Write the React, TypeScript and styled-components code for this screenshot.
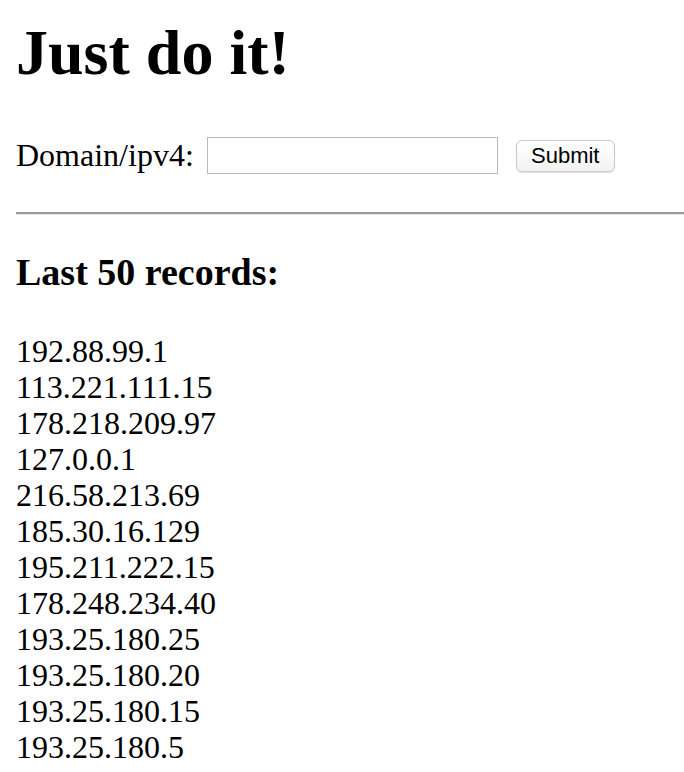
import React, { useState } from 'react'
import styled, { createGlobalStyle } from 'styled-components'

const GlobalStyle = createGlobalStyle`
  html, body {
    margin: 0;
    padding: 0;
    background: #ffffff;
  }
  body {
    font-family: 'Liberation Serif', 'Times New Roman', serif;
    color: #000000;
  }
`

const PageWrapper = styled.div`
  padding-left: 16px;
  overflow: hidden;
`

const Title = styled.h1`
  margin: 16px 0 0;
  font-size: 64px;
  line-height: 74px;
  font-weight: 700;
`

const LookupForm = styled.form`
  display: flex;
  align-items: center;
  height: 37px;
  margin-top: 47px;
`

const Label = styled.label`
  font-size: 32px;
  line-height: 37px;
  margin-right: 13px;
`

const DomainInput = styled.input`
  box-sizing: border-box;
  width: 291px;
  height: 37px;
  border: 1px solid #b9b9b9;
  border-radius: 0;
  padding: 0 6px;
  font-size: 26px;
  outline: none;
`

const SubmitButton = styled.button`
  box-sizing: border-box;
  width: 99px;
  height: 32px;
  margin-left: 18px;
  padding: 0;
  border: 1px solid #c9c9c9;
  border-radius: 6px;
  background: linear-gradient(#ffffff, #f3f3f3);
  box-shadow: 0 1px 1px rgba(0, 0, 0, 0.12);
  font-family: 'Liberation Sans', Arial, sans-serif;
  font-size: 22px;
  color: #000000;
  cursor: pointer;
`

const Divider = styled.hr`
  margin: 38px 0 0;
  height: 0;
  border: none;
  border-top: 2px solid #9b9b9b;
  border-bottom: 1px solid #e8e8e8;
`

const SectionTitle = styled.h3`
  margin: 36px 0 0;
  font-size: 38px;
  line-height: 43px;
  font-weight: 700;
`

const RecordList = styled.div`
  margin-top: 39px;
  font-size: 32px;
  line-height: 36px;
`

const Record = styled.div`
  white-space: nowrap;
`

const records = [
  '192.88.99.1',
  '113.221.111.15',
  '178.218.209.97',
  '127.0.0.1',
  '216.58.213.69',
  '185.30.16.129',
  '195.211.222.15',
  '178.248.234.40',
  '193.25.180.25',
  '193.25.180.20',
  '193.25.180.15',
  '193.25.180.5',
  '193.25.180.1',
]

const App: React.FC = () => {
  const [domain, setDomain] = useState('')

  return (
    <>
      <GlobalStyle />
      <PageWrapper>
        <Title>Just do it!</Title>
        <LookupForm onSubmit={(e) => e.preventDefault()}>
          <Label htmlFor="domain">Domain/ipv4:</Label>
          <DomainInput id="domain" value={domain} onChange={(e) => setDomain(e.target.value)} />
          <SubmitButton type="submit">Submit</SubmitButton>
        </LookupForm>
        <Divider />
        <SectionTitle>Last 50 records:</SectionTitle>
        <RecordList>
          {records.map((ip, i) => (
            <Record key={i}>{ip}</Record>
          ))}
        </RecordList>
      </PageWrapper>
    </>
  )
}

export default App
